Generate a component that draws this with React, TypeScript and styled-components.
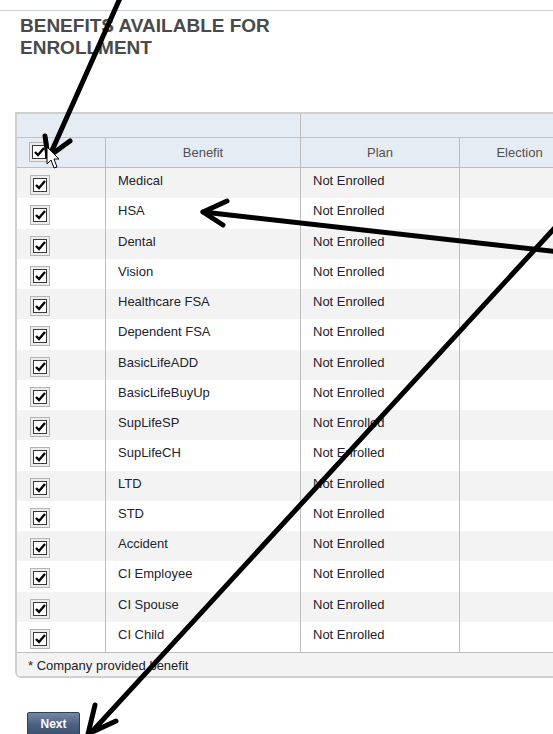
import styled, { createGlobalStyle } from 'styled-components'

const GlobalStyle = createGlobalStyle`
    html, body {
        margin:0;
        padding:0;
        background:#fff;
        overflow:hidden;
    }
    body {
        font-family:"Liberation Sans", Arial, sans-serif;
    }
`

const benefits = [
    'Medical', 'HSA', 'Dental', 'Vision', 'Healthcare FSA', 'Dependent FSA',
    'BasicLifeADD', 'BasicLifeBuyUp', 'SupLifeSP', 'SupLifeCH', 'LTD', 'STD',
    'Accident', 'CI Employee', 'CI Spouse', 'CI Child',
]

const Page = styled.div`
    position:relative;
    width:553px;
    height:734px;
    overflow:hidden;
`
const Rule = styled.div`
    margin-top:10px;
    height:1px;
    background:#c9d0e3;
`
const Title = styled.h1`
    margin:4px 0 0 20px;
    font:bold 19px/22px "Liberation Sans", Arial, sans-serif;
    color:#4a4a4a;
`
const Panel = styled.div`
    margin:53px 0 0 15px;
    width:563px;
    border:2px solid #cfcfcf;
    border-radius:0 0 6px 6px;
    overflow:hidden;
`
const Table = styled.table`
    width:100%;
    table-layout:fixed;
    border-collapse:separate;
    border-spacing:0;
    font-size:13px;
`
const GroupCell = styled.th<{ $divider?: boolean }>`
    height:23px;
    padding:0;
    background:#e6ecf4;
    border-bottom:1px solid #c4c4c4;
    border-right:${p => p.$divider ? '1px solid #bdbdbd' : 'none'};
`
const HeadCell = styled.th<{ $check?: boolean }>`
    box-sizing:border-box;
    height:30px;
    padding:${p => p.$check ? '4px 0 0 12px' : '0'};
    background:#e6ecf4;
    border-right:1px solid #bdbdbd;
    border-bottom:1px solid #bdbdbd;
    font-weight:normal;
    color:#505050;
    text-align:${p => p.$check ? 'left' : 'center'};
    vertical-align:${p => p.$check ? 'top' : 'middle'};
`
const Row = styled.tr<{ $odd: boolean }>`
    background:${p => p.$odd ? '#f3f3f3' : '#fff'};
`
const Cell = styled.td<{ $check?: boolean }>`
    box-sizing:border-box;
    height:30.25px;
    padding:${p => p.$check ? '7px 0 0 13px' : '5px 12px 0'};
    border-right:1px solid #bdbdbd;
    vertical-align:top;
    color:#23232e;
    line-height:15px;
    white-space:nowrap;
`
const Footer = styled.div`
    height:23px;
    padding-left:11px;
    border-top:1px solid #bdbdbd;
    background:#f3f3f3;
    font-size:13px;
    line-height:25px;
    color:#222;
`
const CheckFrame = styled.span`
    display:inline-flex;
    align-items:center;
    justify-content:center;
    box-sizing:border-box;
    width:20px;
    height:20px;
    border:1px solid #b4b4b4;
    background:#ececec;
`
const CheckInner = styled.span`
    display:flex;
    align-items:center;
    justify-content:center;
    box-sizing:border-box;
    width:14px;
    height:14px;
    border:1.5px solid #3a3a3a;
    background:#fff;
`
const NextButton = styled.button`
    display:block;
    margin:34px 0 0 27px;
    width:53px;
    height:24px;
    padding:0;
    border:1px solid #2f3f5a;
    border-radius:2px;
    background:linear-gradient(#7688a6, #4a5e7e 55%, #3c5070);
    color:#fff;
    font:bold 12px "Liberation Sans", Arial, sans-serif;
    cursor:pointer;
`
const Marks = styled.svg`
    position:absolute;
    left:0;
    top:0;
    pointer-events:none;
`

const Checkbox: React.FC = () => (
    <CheckFrame>
        <CheckInner>
            <svg width="11" height="10" viewBox="0 0 11 10">
                <path d="M1 5 L4 8 L10 1" fill="none" stroke="#000" strokeWidth="2.4" />
            </svg>
        </CheckInner>
    </CheckFrame>
)

const App: React.FC = () => {
    return (
        <Page>
            <GlobalStyle />
            <Rule />
            <Title>BENEFITS AVAILABLE FOR<br />ENROLLMENT</Title>
            <Panel>
                <Table>
                    <colgroup>
                        <col style={{ width: 89 }} />
                        <col style={{ width: 195 }} />
                        <col style={{ width: 159 }} />
                        <col />
                    </colgroup>
                    <thead>
                        <tr>
                            <GroupCell colSpan={2} $divider />
                            <GroupCell colSpan={2} />
                        </tr>
                        <tr>
                            <HeadCell $check><Checkbox /></HeadCell>
                            <HeadCell>Benefit</HeadCell>
                            <HeadCell>Plan</HeadCell>
                            <HeadCell>Election</HeadCell>
                        </tr>
                    </thead>
                    <tbody>
                        {benefits.map((name, i) => (
                            <Row key={name} $odd={i % 2 === 0}>
                                <Cell $check><Checkbox /></Cell>
                                <Cell>{name}</Cell>
                                <Cell>Not Enrolled</Cell>
                                <Cell />
                            </Row>
                        ))}
                    </tbody>
                </Table>
                <Footer>* Company provided benefit</Footer>
            </Panel>
            <NextButton>Next</NextButton>

            <Marks width="553" height="734" viewBox="0 0 553 734">
                <g fill="none" stroke="#000" strokeWidth="5" strokeLinecap="round" strokeLinejoin="round">
                    <path d="M121 -4 L50 155" />
                    <path d="M45 136 L48 157 L70 141" />
                    <path d="M560 252 L203 212" />
                    <path d="M227 201 L203 212 L223 225" />
                    <path d="M562 220 L88 736" />
                    <path d="M95 705 L88 734 L116 721" />
                </g>
                <path d="M47 147 L47 164 L51 160 L54 168 L57 167 L54 159 L59 159 Z" fill="#fff" stroke="#000" strokeWidth="1" strokeLinejoin="round" />
            </Marks>
        </Page>
    )
}

export default App
